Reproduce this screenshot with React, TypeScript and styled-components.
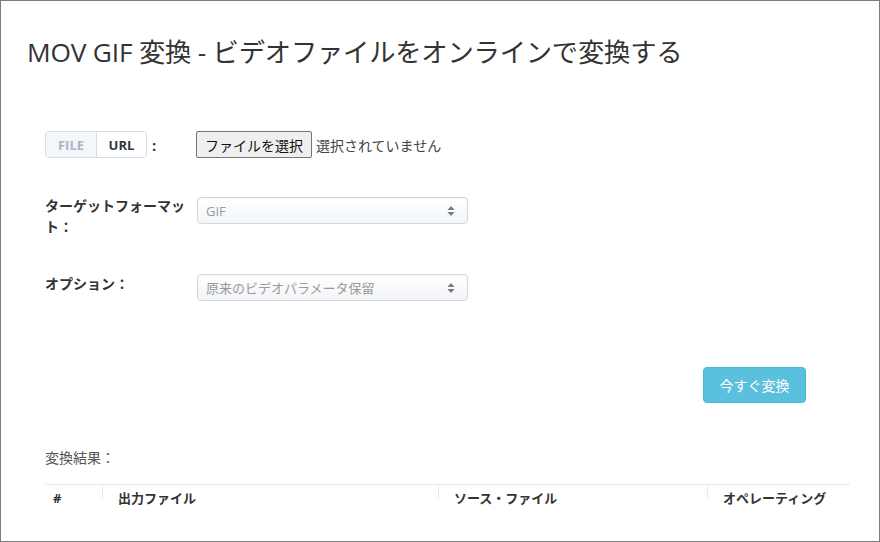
import styled, { createGlobalStyle } from "styled-components";

const GlobalStyle = createGlobalStyle`
  html, body {
    margin: 0;
    padding: 0;
    background: #ffffff;
  }
  body {
    font-family: "Open Sans", "Noto Sans CJK JP", sans-serif;
    color: #333333;
  }
`;

const COLUMNS = [
  { title: "#", width: 57, pad: 8 },
  { title: "出力ファイル", width: 336, pad: 16 },
  { title: "ソース・ファイル", width: 269, pad: 16 },
  { title: "オペレーティング", width: 143, pad: 16 },
];

const SelectArrows = () => (
  <svg width="8" height="12" viewBox="0 0 8 12">
    <path d="M4 1 L7.5 5 L0.5 5 Z" fill="#7a7a7a" />
    <path d="M4 11 L7.5 7 L0.5 7 Z" fill="#7a7a7a" />
  </svg>
);

const App = () => {
  return (
    <>
      <GlobalStyle />
      <Frame>
        <Title>MOV GIF 変換 - ビデオファイルをオンラインで変換する</Title>

        <Form>
          <Row $gap={37}>
            <SourceLabel>
              <Toggle>
                <ToggleItem $active={false}>FILE</ToggleItem>
                <ToggleItem $active>URL</ToggleItem>
              </Toggle>
              <Colon>:</Colon>
            </SourceLabel>
            <FilePicker>
              <FileButton>ファイルを選択</FileButton>
              <FileStatus>選択されていません</FileStatus>
            </FilePicker>
          </Row>

          <Row $gap={36}>
            <Label>ターゲットフォーマット：</Label>
            <Select $offset={2}>
              <span>GIF</span>
              <SelectArrows />
            </Select>
          </Row>

          <Row $gap={0}>
            <Label>オプション：</Label>
            <Select $offset={1}>
              <span>原来のビデオパラメータ保留</span>
              <SelectArrows />
            </Select>
          </Row>
        </Form>

        <Actions>
          <ConvertButton>今すぐ変換</ConvertButton>
        </Actions>

        <ResultTitle>変換結果：</ResultTitle>

        <ResultTable>
          {COLUMNS.map((col, index) => (
            <HeaderCell
              key={col.title}
              $width={col.width}
              $pad={col.pad}
              $divider={index > 0}
            >
              {col.title}
            </HeaderCell>
          ))}
        </ResultTable>
      </Frame>
    </>
  );
};

const Frame = styled.div`
  box-sizing: border-box;
  width: 880px;
  height: 542px;
  border: 1px solid #7d7d7d;
  padding: 0 29px 0 44px;
  overflow: hidden;
`;

const Title = styled.h1`
  margin: 35px 0 0 -18px;
  font-size: 26.3px;
  line-height: 33px;
  font-weight: 400;
  color: #333;
  letter-spacing: -0.2px;
`;

const Form = styled.div`
  margin-top: 62px;
  display: flex;
  flex-direction: column;
`;

const Row = styled.div<{ $gap: number }>`
  display: flex;
  align-items: flex-start;
  margin-bottom: ${(p) => p.$gap}px;
`;

const SourceLabel = styled.div`
  width: 151px;
  display: flex;
  align-items: center;
  height: 27px;
`;

const Toggle = styled.div`
  display: flex;
  box-sizing: border-box;
  height: 27px;
  border: 1px solid #d3dce8;
  border-radius: 4px;
  overflow: hidden;
`;

const ToggleItem = styled.div<{ $active: boolean }>`
  display: flex;
  align-items: center;
  justify-content: center;
  width: ${(p) => (p.$active ? 49 : 50)}px;
  font-size: 13px;
  font-weight: 700;
  color: ${(p) => (p.$active ? "#2f3640" : "#a9b5c6")};
  background: ${(p) => (p.$active ? "#ffffff" : "#f4f6f9")};
  border-left: ${(p) => (p.$active ? "1px solid #d3dce8" : "none")};
`;

const Colon = styled.span`
  margin-left: 5px;
  font-weight: 700;
  font-size: 15px;
  color: #333;
`;

const FilePicker = styled.div`
  display: flex;
  align-items: center;
  gap: 4px;
`;

const FileButton = styled.button`
  box-sizing: border-box;
  height: 27px;
  width: 116px;
  padding: 0;
  background: #efefef;
  border: 1px solid #767676;
  border-radius: 2px;
  font-family: "Open Sans", "Noto Sans CJK JP", sans-serif;
  font-size: 14px;
  color: #111;
`;

const FileStatus = styled.span`
  font-size: 14px;
  color: #444;
`;

const Label = styled.div`
  width: 152px;
  font-size: 14px;
  font-weight: 700;
  line-height: 21px;
  color: #333;
`;

const Select = styled.div<{ $offset: number }>`
  box-sizing: border-box;
  margin-top: ${(p) => p.$offset}px;
  width: 271px;
  height: 27px;
  display: flex;
  align-items: center;
  justify-content: space-between;
  padding: 0 12px 0 8px;
  border: 1px solid #cfd8e3;
  border-radius: 4px;
  background: linear-gradient(#ffffff, #f2f4f6);
  box-shadow: inset 0 1px 1px rgba(0, 0, 0, 0.04);
  font-size: 13px;
  color: #9a9a9a;
`;

const Actions = styled.div`
  display: flex;
  justify-content: flex-end;
  padding-right: 44px;
  margin-top: 66px;
`;

const ConvertButton = styled.button`
  box-sizing: border-box;
  width: 103px;
  height: 36px;
  background: #5bc0de;
  border: 1px solid #46b8da;
  border-radius: 4px;
  color: #ffffff;
  font-family: "Open Sans", "Noto Sans CJK JP", sans-serif;
  font-size: 14px;
`;

const ResultTitle = styled.div`
  margin-top: 45px;
  font-size: 14px;
  line-height: 20px;
  color: #555;
`;

const ResultTable = styled.div`
  margin-top: 16px;
  display: flex;
  width: 805px;
  border-top: 1px solid #e6e9ef;
`;

const HeaderCell = styled.div<{ $width: number; $pad: number; $divider: boolean }>`
  box-sizing: border-box;
  position: relative;
  width: ${(p) => p.$width}px;
  padding: 2px 0 0 ${(p) => p.$pad}px;
  font-size: 13px;
  font-weight: 700;
  line-height: 22px;
  color: #333;

  &::before {
    content: "";
    display: ${(p) => (p.$divider ? "block" : "none")};
    position: absolute;
    left: 0;
    top: 0;
    height: 13px;
    border-left: 1px solid #e6e9ef;
  }
`;

export default App;
